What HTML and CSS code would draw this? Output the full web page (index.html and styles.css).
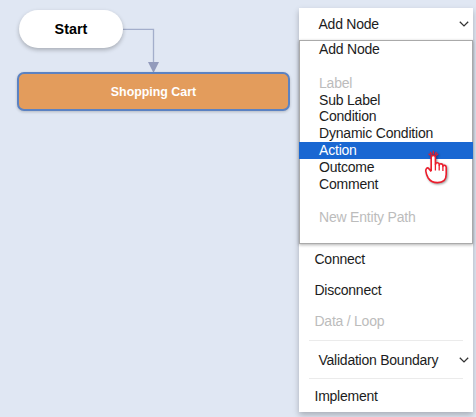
FILE: index.html
```html
<!DOCTYPE html>
<html lang="en">
<head>
  <meta charset="UTF-8" />
  <meta name="viewport" content="width=device-width, initial-scale=1" />
  <title>Flow Editor</title>
  <link rel="stylesheet" href="styles.css">
</head>
<body>

  <main class="canvas">
    <svg class="connector" width="44" height="48" viewBox="0 0 44 48">
      <path d="M0 4.4H30.5V38" fill="none" stroke="#a3aecb" stroke-width="1.3" />
      <path d="M25 37H36L30.5 48Z" fill="#929bbc" />
    </svg>
    <div class="node start">Start</div>
    <div class="node cart">Shopping Cart</div>
  </main>

  <aside class="panel">
    <div class="select">
      <span>Add Node</span>
      <svg class="chevron" width="10" height="6" viewBox="0 0 10 6"><path d="M0.8 0.8L5 4.9L9.2 0.8" /></svg>
    </div>

    <ul class="options">
      <li>Add Node</li>
      <li></li>
      <li class="disabled">Label</li>
      <li>Sub Label</li>
      <li>Condition</li>
      <li>Dynamic Condition</li>
      <li class="active">Action</li>
      <li>Outcome</li>
      <li>Comment</li>
      <li></li>
      <li class="disabled">New Entity Path</li>
    </ul>

    <div class="item">Connect</div>
    <div class="item">Disconnect</div>
    <div class="item disabled">Data / Loop</div>
    <hr>
    <div class="select boundary">
      <span>Validation Boundary</span>
      <svg class="chevron" width="10" height="6" viewBox="0 0 10 6"><path d="M0.8 0.8L5 4.9L9.2 0.8" /></svg>
    </div>
    <hr>
    <div class="item last">Implement</div>
  </aside>

  <svg class="pointer" width="28" height="38" viewBox="0 0 28 38">
    <path class="hand" d="M8.2 21V7.6C8.2 4.6 12.4 4.6 12.4 7.6V14.5C12.8 12.1 16.2 12.3 16.2 14.6V15.2C16.8 13.1 19.9 13.5 19.9 15.8V16.4C20.7 14.6 23.2 15.1 23.2 17.3V24.2C23.2 29.8 19.8 32.6 14.6 32.6C10 32.6 7.2 31.2 5.2 28C3.8 25.6 3.1 23.4 2.8 21C2.6 18.8 4.4 17 5.6 18.4L8.2 21.4" />
    <path class="rays" d="M12.4 14.5V20.6M16.2 15.2V20.4M19.9 16.4V21M10.3 0.8V4M7.2 2L8.6 4.6M13.4 2L12 4.6M5.6 3.8L7.6 5.6M15 3.8L13 5.6" />
  </svg>

</body>
</html>
```

FILE: styles.css
```css
* {
  box-sizing: border-box;
}

body {
  margin: 0;
  height: 417px;
  position: relative;
  overflow: hidden;
  display: flex;
  justify-content: space-between;
  padding: 8px 3px 5px 0;
  background-color: #e0e7f3;
  font-family: "Liberation Sans", Arial, sans-serif;
  font-size: 14px;
  letter-spacing: -0.2px;
  color: #1c1c1c;
}

.canvas {
  width: 299px;
}

/* flow diagram */
.node {
  position: absolute;
  display: flex;
  justify-content: center;
  align-items: center;
  font-weight: bold;
  letter-spacing: 0;
}

.start {
  left: 19px;
  top: 10px;
  width: 104px;
  height: 38px;
  border-radius: 19px;
  background-color: white;
  color: black;
  font-size: 14.4px;
  box-shadow: 0 2px 4px rgba(0, 0, 0, 0.25);
}

.cart {
  left: 17px;
  top: 72px;
  width: 273px;
  height: 39px;
  border: 2px solid #5b82c2;
  border-radius: 7px;
  background-color: #e39c5c;
  color: white;
  font-size: 12.4px;
  box-shadow: 0 1px 3px rgba(0, 0, 0, 0.2);
}

.connector {
  position: absolute;
  left: 123px;
  top: 25px;
}

/* side menu */
.panel {
  width: 174px;
  height: 404px;
  background-color: white;
  box-shadow: 0 3px 6px rgba(0, 0, 0, 0.25);
}

.select {
  display: flex;
  justify-content: space-between;
  align-items: center;
  height: 32px;
  padding: 0 4px 0 19.5px;
  letter-spacing: -0.24px;
}

.chevron {
  fill: none;
  stroke: #333;
  stroke-width: 1.3;
}

.options {
  list-style: none;
  margin: 0;
  padding: 0;
  height: 204px;
  border: 1px solid #aaa;
  background-color: white;
  box-shadow: 0 1px 3px rgba(0, 0, 0, 0.3);
}

.options li {
  height: 16.85px;
  line-height: 17.6px;
  padding-left: 19px;
}

.options .active {
  margin: 0 -1px;
  padding-left: 20px;
  background-color: #1967d2;
  color: white;
}

.item {
  height: 31px;
  line-height: 31px;
  padding-left: 15.5px;
  letter-spacing: -0.24px;
}

.options .disabled,
.item.disabled {
  color: #bcbcbc;
}

hr {
  height: 1px;
  margin: 0 10px;
  border: none;
  background-color: #ebebeb;
}

.item.disabled + hr {
  margin-top: 3px;
}

.boundary {
  height: 37px;
}

.last {
  height: 34px;
  line-height: 35px;
}

/* mouse pointer over the active option */
.pointer {
  position: absolute;
  left: 423px;
  top: 150px;
  filter: drop-shadow(1px 1px 1px rgba(0, 0, 0, 0.4));
}

.hand {
  fill: white;
  stroke: #ec1c2b;
  stroke-width: 1.6;
  stroke-linejoin: round;
}

.rays {
  fill: none;
  stroke: #ec1c2b;
  stroke-width: 1.3;
}
```
